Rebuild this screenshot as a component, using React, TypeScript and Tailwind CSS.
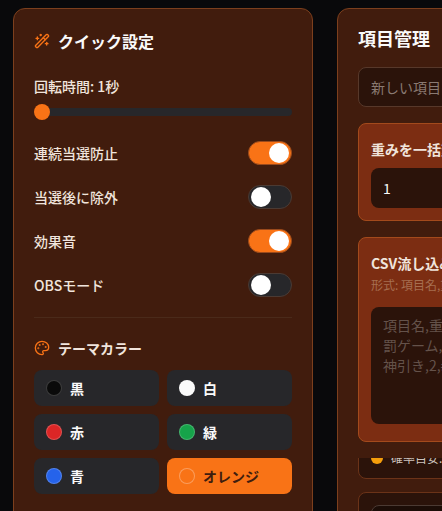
import { Palette, WandSparkles } from "lucide-react";

const font = "font-['Noto_Sans_CJK_JP','Noto_Sans',sans-serif]";

const toggles = [
  { label: "連続当選防止", on: true },
  { label: "当選後に除外", on: false },
  { label: "効果音", on: true },
  { label: "OBSモード", on: false },
];

const colors = [
  { name: "黒", dot: "bg-[#0a0a0a] border-white/20" },
  { name: "白", dot: "bg-[#fafafa] border-white/20" },
  { name: "赤", dot: "bg-[#dc2626] border-white/20" },
  { name: "緑", dot: "bg-[#16a34a] border-white/20" },
  { name: "青", dot: "bg-[#2563eb] border-white/20" },
  { name: "オレンジ", dot: "bg-[#f97316] border-white/30", active: true },
];

function Toggle({ on }: { on: boolean }) {
  return (
    <div
      className={`flex h-6 w-11 items-center rounded-full border ${
        on ? "justify-end border-[#9a4a1c] bg-[#f97316] pr-[2px]" : "justify-start border-[#4b3a33] bg-[#27272a] pl-[2px]"
      }`}
    >
      <div className="h-5 w-5 rounded-full bg-white" />
    </div>
  );
}

export default function App() {
  return (
    <div className={`${font} flex h-[511px] w-[442px] items-start gap-6 overflow-hidden bg-[#09090b] pt-2 pl-[13px]`}>
      <aside className="h-[560px] w-[300px] shrink-0 rounded-xl border border-[#7c3f1d] bg-[#411c0d] p-5">
        <h2 className="flex h-6 items-center gap-2 text-base font-bold text-[#fafafa]">
          <WandSparkles size={16} className="text-[#f97316]" />
          クイック設定
        </h2>

        <div className="mt-[23px] text-sm leading-5 font-medium text-[#f0e4dc]">回転時間: 1秒</div>
        <div className="relative mt-2 flex h-4 items-center">
          <div className="h-2 w-full rounded-full bg-[#27272a]" />
          <div className="absolute left-0 h-4 w-4 rounded-full bg-[#f97316]" />
        </div>

        <div className="mt-[21px] flex flex-col gap-5">
          {toggles.map((t) => (
            <div key={t.label} className="flex h-6 items-center justify-between text-sm font-medium text-[#f0e4dc]">
              {t.label}
              <Toggle on={t.on} />
            </div>
          ))}
        </div>

        <div className="mt-5 border-t border-[#4a2a1a]" />

        <h3 className="mt-5 flex h-5 items-center gap-2 text-sm font-semibold text-[#f0e4dc]">
          <Palette size={16} className="text-[#f97316]" />
          テーマカラー
        </h3>

        <div className="mt-3 grid grid-cols-2 gap-2">
          {colors.map((c) => (
            <button
              key={c.name}
              className={`flex h-9 items-center gap-2 rounded-lg px-3 text-sm font-bold ${
                c.active ? "bg-[#f97316] text-[#3f1d0e]" : "bg-[#27272a] text-[#fafafa]"
              }`}
            >
              <span className={`h-4 w-4 rounded-full border ${c.dot}`} />
              {c.name}
            </button>
          ))}
        </div>
      </aside>

      <main className="h-[560px] w-[300px] shrink-0 rounded-xl border border-[#7c3f1d] bg-[#411c0d] px-5 pt-[15px]">
        <h2 className="text-lg leading-[28px] font-bold whitespace-nowrap text-[#fafafa]">項目管理</h2>

        <input
          readOnly
          placeholder="新しい項目を入力"
          className="mt-[15px] h-10 w-full rounded-lg border border-[#57382a] bg-[#2b130a] px-3 text-sm text-[#f0e4dc] outline-none placeholder:text-[#8a7a72]"
        />

        <section className="mt-4 h-[98px] rounded-lg border border-[#a34a1c] bg-[#7c2d12] p-3">
          <div className="mt-[3px] text-sm leading-5 font-semibold whitespace-nowrap text-[#f0e4dc]">重みを一括変更する</div>
          <div className="mt-[9px] flex h-10 items-center rounded-lg bg-[#2b130a] px-3 text-sm text-[#fafafa]">1</div>
        </section>

        <section className="mt-4 h-[205px] rounded-lg border border-[#a34a1c] bg-[#7c2d12] p-3">
          <div className="mt-[3px] text-sm leading-5 font-semibold whitespace-nowrap text-[#f0e4dc]">CSV流し込み</div>
          <div className="mt-1 text-xs leading-4 whitespace-nowrap text-[#a66e50]">形式: 項目名,重み,色</div>
          <textarea
            readOnly
            placeholder={"項目名,重み,色\n罰ゲーム,1,#ff0000\n神引き,2,#00ff00"}
            className="mt-[14px] h-[117px] w-full resize-none overflow-hidden rounded-lg bg-[#2b130a] px-3 py-2 text-sm leading-[20px] outline-none placeholder:text-[#64524a]"
          />
        </section>

        {/* list is scrolled, first row is cut by the top of the scroll area */}
        <div className="mt-4 h-[80px] overflow-hidden">
          <div className="-mt-7 flex h-[49px] items-end rounded-lg border border-[#6b3318] bg-[#2b130a] px-3 pb-[14px]">
            <div className="flex h-3 items-center gap-2">
              <span className="h-3 w-3 rounded-full bg-[#f59e0b]" />
              <span className="text-xs leading-4 whitespace-nowrap text-[#cfc4bd]">確率目安: 25%</span>
            </div>
          </div>

          <div className="mt-[13px] h-20 rounded-lg border border-[#6b3318] bg-[#2b130a] p-3">
            <div className="h-10 rounded-lg border border-[#4b3a33] bg-[#1c0d07]" />
          </div>
        </div>
      </main>
    </div>
  );
}
